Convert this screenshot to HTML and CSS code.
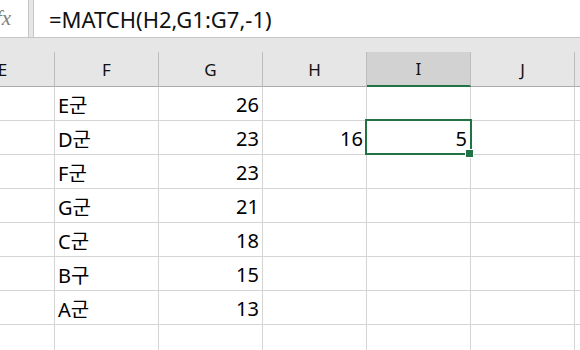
FILE: index.html
```html
<!DOCTYPE html>
<html lang="ko">

<head>
    <meta charset="UTF-8">
    <meta name="viewport" content="width=device-width, initial-scale=1.0">
    <title>MATCH</title>
    <link rel="stylesheet" href="styles.css">
</head>

<body>

    <div class="formula-bar">
        <div class="fx-box"><span class="fx">fx</span></div>
        <div class="formula">=MATCH(H2,G1:G7,-1)</div>
    </div>

    <div class="sheet">
        <div class="heads">
            <div class="head">E</div>
            <div class="head">F</div>
            <div class="head">G</div>
            <div class="head">H</div>
            <div class="head selected">I</div>
            <div class="head">J</div>
            <div class="head"></div>
        </div>

        <div class="grid">
            <!-- 1 -->
            <div class="cell"></div>
            <div class="cell">E군</div>
            <div class="cell num">26</div>
            <div class="cell"></div>
            <div class="cell"></div>
            <div class="cell"></div>
            <div class="cell"></div>
            <!-- 2 -->
            <div class="cell"></div>
            <div class="cell">D군</div>
            <div class="cell num">23</div>
            <div class="cell num">16</div>
            <div class="cell num">5</div>
            <div class="cell"></div>
            <div class="cell"></div>
            <!-- 3 -->
            <div class="cell"></div>
            <div class="cell">F군</div>
            <div class="cell num">23</div>
            <div class="cell"></div>
            <div class="cell"></div>
            <div class="cell"></div>
            <div class="cell"></div>
            <!-- 4 -->
            <div class="cell"></div>
            <div class="cell">G군</div>
            <div class="cell num">21</div>
            <div class="cell"></div>
            <div class="cell"></div>
            <div class="cell"></div>
            <div class="cell"></div>
            <!-- 5 -->
            <div class="cell"></div>
            <div class="cell">C군</div>
            <div class="cell num">18</div>
            <div class="cell"></div>
            <div class="cell"></div>
            <div class="cell"></div>
            <div class="cell"></div>
            <!-- 6 -->
            <div class="cell"></div>
            <div class="cell">B구</div>
            <div class="cell num">15</div>
            <div class="cell"></div>
            <div class="cell"></div>
            <div class="cell"></div>
            <div class="cell"></div>
            <!-- 7 -->
            <div class="cell"></div>
            <div class="cell">A군</div>
            <div class="cell num">13</div>
            <div class="cell"></div>
            <div class="cell"></div>
            <div class="cell"></div>
            <div class="cell"></div>
            <!-- 8 -->
            <div class="cell"></div>
            <div class="cell"></div>
            <div class="cell"></div>
            <div class="cell"></div>
            <div class="cell"></div>
            <div class="cell"></div>
            <div class="cell"></div>
        </div>

        <!-- 선택된 셀 I2 -->
        <div class="selection"></div>
        <div class="handle"></div>
    </div>

</body>

</html>
```

FILE: styles.css
```css
html,
body {
    margin: 0;
    padding: 0;
    width: 580px;
    height: 350px;
    overflow: hidden;
    background: #fff;
    font-family: "Noto Sans", "Noto Sans CJK KR", sans-serif;
    color: #000;
}

.formula-bar {
    display: flex;
    height: 38px;
    box-sizing: border-box;
    background: #e6e6e6;
    border-bottom: 1px solid #c6c6c6;
}

.fx-box {
    width: 29px;
    box-sizing: border-box;
    background: #fff;
    border-right: 1px solid #c6c6c6;
    display: flex;
    align-items: center;
    justify-content: flex-end;
    padding-right: 17px;
    overflow: hidden;
}

.fx {
    font-family: "Liberation Serif", serif;
    font-style: italic;
    font-size: 21px;
    color: #808080;
    white-space: nowrap;
}

.formula {
    flex: 1;
    margin-left: 4px;
    background: #fff;
    border-left: 1px solid #c6c6c6;
    display: flex;
    align-items: center;
    padding-left: 15px;
    font-size: 22px;
    color: #111;
}

.sheet {
    position: relative;
}

.heads {
    display: grid;
    grid-template-columns: repeat(7, 104px);
    margin-left: -49px;
    padding-top: 14px;
    background: #e6e6e6;
}

.head {
    height: 35px;
    box-sizing: border-box;
    border-right: 1px solid #bdbdbd;
    border-bottom: 1px solid #ababab;
    display: flex;
    align-items: center;
    justify-content: center;
    font-size: 17px;
    color: #111;
}

.head.selected {
    background: #d2d2d2;
    border-bottom: 2px solid #217346;
}

.grid {
    display: grid;
    grid-template-columns: repeat(7, 104px);
    grid-auto-rows: 34px;
    margin-left: -49px;
}

.cell {
    box-sizing: border-box;
    border-right: 1px solid #d4d4d4;
    border-bottom: 1px solid #d4d4d4;
    display: flex;
    align-items: center;
    padding: 1px 3px 0 3px;
    font-size: 20px;
    white-space: nowrap;
}

.num {
    justify-content: flex-end;
}

.selection {
    position: absolute;
    left: 365px;
    top: 81px;
    width: 107px;
    height: 36px;
    box-sizing: border-box;
    border: 2px solid #217346;
}

.handle {
    position: absolute;
    left: 465px;
    top: 111px;
    width: 7px;
    height: 7px;
    background: #217346;
    border: 1px solid #fff;
}
```
